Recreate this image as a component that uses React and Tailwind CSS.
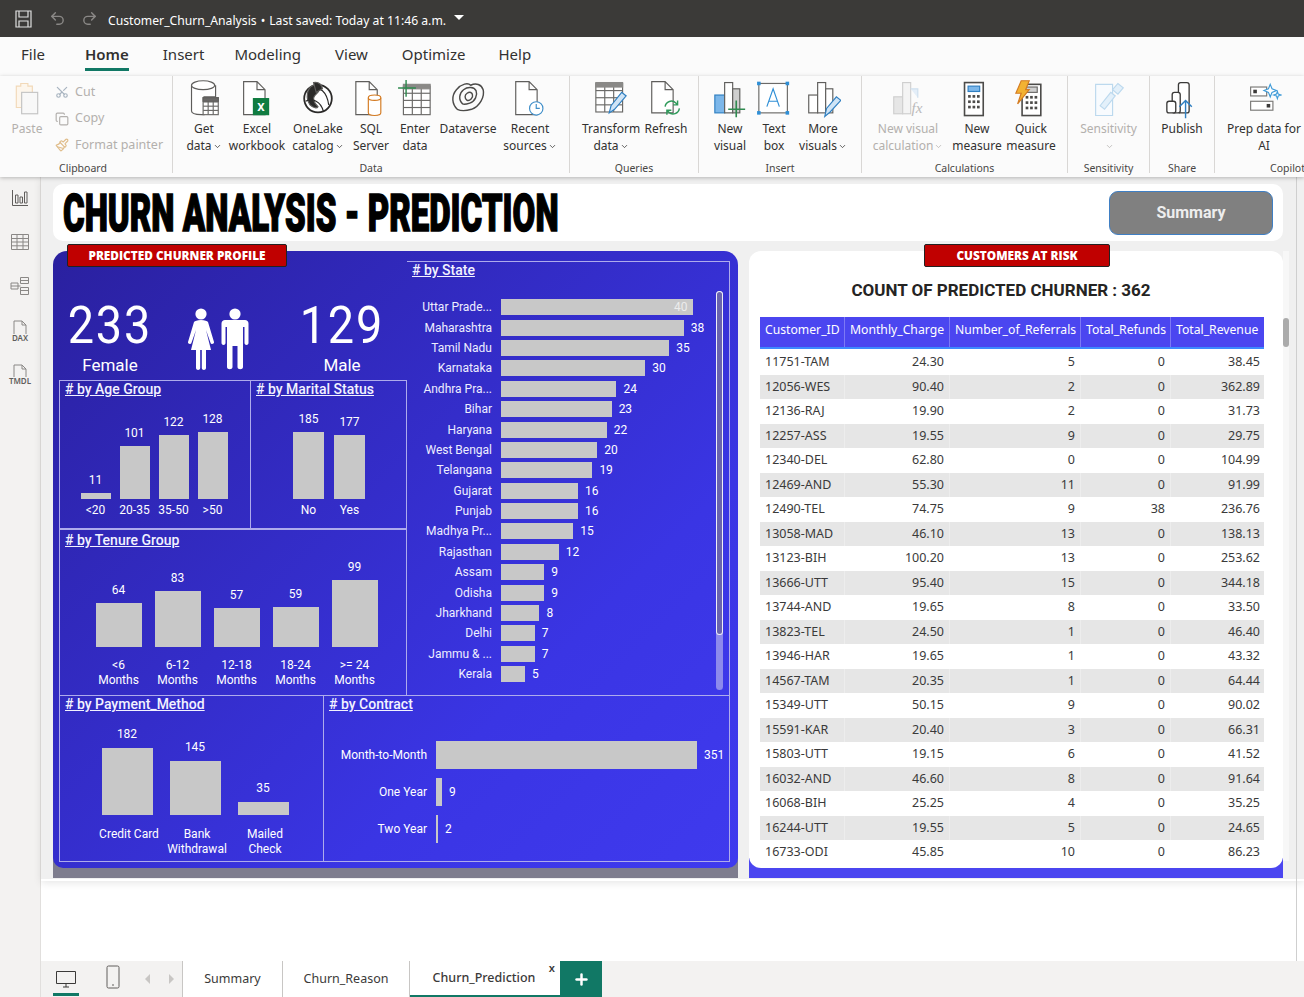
import { Scissors, Copy, Paintbrush, ChevronDown, Undo2, Redo2, Plus } from 'lucide-react';

const din = 'font-[Roboto,sans-serif]';
const ui = 'font-["Noto_Sans",sans-serif]';

const Sv = ({ children, w = 40, h = 46 }) => (
  <svg width={36} height={41} viewBox={`0 0 ${w} ${h}`} fill="none" stroke="#5f5e5c" strokeWidth="1.3">{children}</svg>
);

const Grid = ({ x, y, w, h, cols = 3, rows = 3, stroke = '#6b6a68' }) => {
  const lines = [];
  for (let i = 1; i < cols; i++) lines.push(<line key={'c' + i} x1={x + (w * i) / cols} y1={y} x2={x + (w * i) / cols} y2={y + h} />);
  for (let i = 1; i < rows; i++) lines.push(<line key={'r' + i} x1={x} y1={y + (h * i) / rows} x2={x + w} y2={y + (h * i) / rows} />);
  return (
    <g stroke={stroke}>
      <rect x={x} y={y} width={w} height={h} fill="#fff" />
      {lines}
    </g>
  );
};

const Doc = ({ x = 5, y = 3, w = 24, h = 36, stroke = '#5f5e5c' }) => (
  <path d={`M${x} ${y}h${w - 9}l9 9v${h - 9}h-${w}z M${x + w - 9} ${y}v9h9`} stroke={stroke} fill="#fff" />
);

const icons = {
  paste: (
    <Sv>
      <path d="M8 8h5v-3h8v3h5v24h-18z" stroke="#f2d9b8" fill="#fdf6ec" />
      <rect x="14" y="15" width="18" height="24" stroke="#c4c4c4" fill="#f8f8f8" />
    </Sv>
  ),
  get: (
    <Sv>
      <path d="M6 7v29c0 3 5 4 11 4h3V20h13V7" fill="#fff" />
      <ellipse cx="19" cy="7" rx="13" ry="5" fill="#fff" />
      <Grid x={19} y={21} w={17} h={19} rows={4} />
      <rect x="19" y="21" width="17" height="4" fill="#6b6a68" />
    </Sv>
  ),
  excel: (
    <Sv>
      <Doc x={5} y={3} w={24} h={37} />
      <rect x="16" y="22" width="17" height="18" fill="#107c41" stroke="#107c41" />
      <text x="24.5" y="36" fontSize="13" fontWeight="700" fill="#fff" stroke="none" textAnchor="middle" fontFamily="Roboto">X</text>
    </Sv>
  ),
  onelake: (
    <Sv>
      <circle cx="20" cy="22" r="15.5" fill="#fff" stroke="#2b2a29" strokeWidth="2" />
      <path d="M15 7c-8 3-9 15-4 22 4 4 8 4 9 2-5-5-7-10-2-14 4-3 5-7-3-10z" fill="#2b2a29" />
      <path d="M6 25c8-4 17 0 20 11M12 10c10-2 18 4 20 19" stroke="#2b2a29" />
      <path d="M15 4c6-1 9 2 10 7l-7 4z" fill="#2b2a29" />
    </Sv>
  ),
  sql: (
    <Sv>
      <Doc x={3} y={3} w={24} h={37} />
      <path d="M17 21v17c0 2 3 3 7 3s7-1 7-3V21" stroke="#d47b22" fill="#fff" />
      <ellipse cx="24" cy="21" rx="7" ry="3" stroke="#d47b22" fill="#fff" />
    </Sv>
  ),
  enter: (
    <Sv>
      <Grid x={7} y={8} w={30} h={32} rows={4} />
      <rect x="7" y="6" width="30" height="5" fill="#8a8987" stroke="#8a8987" />
      <path d="M10 1v19M1 10h20" stroke="#2f8a4f" strokeWidth="1.6" />
    </Sv>
  ),
  dataverse: (
    <Sv>
      <g stroke="#4c4b49" strokeWidth="1.6">
        <path d="M8 34c-6-6-7-15-1-22 6-7 13-8 16-5 6-3 12-1 14 5 2 8-4 19-13 22-7 2-12 2-16 0z" />
        <path d="M14 28c-5-5-4-12 1-16 5-4 12-3 14 1 2 5-1 12-7 14-3 1-6 2-8 1z" />
        <path d="M19 24c-3-2-3-6 0-8 3-2 6-1 6 2 1 3-3 7-6 6z" />
      </g>
    </Sv>
  ),
  recent: (
    <Sv>
      <Doc x={4} y={3} w={24} h={37} />
      <circle cx="27" cy="33" r="7.5" stroke="#3f8ec9" fill="#fff" />
      <path d="M27 28v5h4" stroke="#3f8ec9" />
    </Sv>
  ),
  transform: (
    <Sv>
      <Grid x={3} y={5} w={30} h={32} rows={4} />
      <rect x="3" y="4" width="30" height="5" fill="#8a8987" stroke="#8a8987" />
      <path d="M18 38l2-8 12-15 5 4-13 15z" fill="#cfe4f6" stroke="#2f7fc1" />
    </Sv>
  ),
  refresh: (
    <Sv>
      <Doc x={4} y={3} w={24} h={35} />
      <path d="M19 31a7 7 0 0 1 12-4l2 2M35 33a7 7 0 0 1-12 4l-2-2M33 24v5h-5M21 40v-5h5" stroke="#2f9a5a" strokeWidth="1.6" fill="none" />
    </Sv>
  ),
  newvisual: (
    <Sv>
      <rect x="3" y="18" width="11" height="20" fill="#7cb7ea" stroke="#2f7fc1" />
      <rect x="14" y="4" width="9" height="34" fill="#fff" />
      <rect x="23" y="11" width="8" height="27" fill="#cfcfcf" />
      <path d="M27 24v19M18 34h19" stroke="#2f8a4f" strokeWidth="1.8" />
    </Sv>
  ),
  textbox: (
    <Sv>
      <rect x="3" y="5" width="32" height="33" fill="#fff" stroke="#6b6a68" />
      <path d="M12 31l7-20 7 20M14.5 25h9" stroke="#2f8fd6" />
      {[[3, 5], [35, 5], [3, 38], [35, 38]].map(([x, y]) => (
        <rect key={x + '-' + y} x={x - 2} y={y - 2} width="4" height="4" fill="#2f8fd6" stroke="none" />
      ))}
    </Sv>
  ),
  morevisuals: (
    <Sv>
      <rect x="4" y="18" width="10" height="20" fill="#fff" />
      <rect x="14" y="4" width="9" height="34" fill="#fff" />
      <rect x="23" y="11" width="8" height="27" fill="#fff" />
      <path d="M22 42l2-9 11-13 5 4-12 13z" fill="#cfe4f6" stroke="#2f7fc1" />
    </Sv>
  ),
  visualcalc: (
    <Sv>
      <rect x="4" y="20" width="10" height="19" fill="#e6e6e6" stroke="#cfcfcf" />
      <rect x="14" y="4" width="9" height="35" fill="#f4f4f4" stroke="#cfcfcf" />
      <path d="M23 11h8v10" fill="#e4eef8" stroke="#cfdfee" />
      <text x="24" y="38" fontSize="17" fontStyle="italic" fontFamily="Liberation Serif" fill="#b9b9b9" stroke="none">fx</text>
    </Sv>
  ),
  measure: (
    <Sv>
      <rect x="6" y="4" width="21" height="37" fill="#fff" stroke="#4c4b49" strokeWidth="1.8" />
      <rect x="10" y="8" width="13" height="6" fill="#7cb7ea" stroke="#2f7fc1" />
      {[18, 24, 30].map((y) => [10, 15, 20].map((x) => <rect key={x + '-' + y} x={x} y={y} width="3" height="3" fill="#4c4b49" stroke="none" />))}
    </Sv>
  ),
  quick: (
    <Sv>
      <rect x="10" y="6" width="21" height="35" fill="#fff" stroke="#4c4b49" strokeWidth="1.8" />
      <rect x="14" y="9" width="13" height="6" fill="#cfcfcf" stroke="#6b6a68" />
      {[19, 25, 31].map((y) => [14, 19, 24].map((x) => <rect key={x + '-' + y} x={x} y={y} width="3" height="3" fill="#4c4b49" stroke="none" />))}
      <path d="M9 2h9l-4 10h4L5 28l4-12H3z" fill="#f2b233" stroke="#d47b22" />
    </Sv>
  ),
  sensitivity: (
    <Sv>
      <path d="M5 6h19v35H5z" stroke="#bcd9ee" fill="#f8fbfe" />
      <path d="M10 30l12-15 5 4-12 15zM24 12l6-7 6 5-6 7z" stroke="#bcd9ee" fill="#e3f0fa" />
    </Sv>
  ),
  publish: (
    <Sv>
      <rect x="16" y="4" width="12" height="34" rx="2.5" fill="#fff" stroke="#3b3a39" strokeWidth="1.5" />
      <rect x="9" y="15" width="9" height="23" rx="2.5" fill="#fff" stroke="#3b3a39" strokeWidth="1.5" />
      <rect x="3" y="25" width="10" height="13" rx="2.5" fill="#fff" stroke="#3b3a39" strokeWidth="1.5" />
      <path d="M24 44V24M17 31l7-7 7 7" stroke="#2f7fc1" strokeWidth="1.6" />
    </Sv>
  ),
  prep: (
    <Sv>
      <rect x="5" y="9" width="18" height="10" fill="#fff" stroke="#7a7977" />
      <rect x="8" y="12" width="4" height="4" fill="#3b3a39" stroke="none" />
      <rect x="5" y="25" width="25" height="10" fill="#fff" stroke="#7a7977" />
      <rect x="23" y="28" width="4" height="4" fill="#3b3a39" stroke="none" />
      <path d="M27 6l2 5 5 2-5 2-2 5-2-5-5-2 5-2zM35 14l1 3 3 1-3 1-1 3-1-3-3-1 3-1z" fill="#fff" stroke="#3f9bd8" />
    </Sv>
  ),
};

function RibbonItem({ w, icon, lines, caret, muted }) {
  return (
    <div className={`shrink-0 flex flex-col items-center ${muted ? 'text-[#b3b0ad]' : 'text-[#323130]'}`} style={{ width: w }}>
      <div className="h-[41px] flex items-center justify-center">{icons[icon]}</div>
      {lines.map((l, i) => (
        <div key={l + i} className="h-[17px] leading-[17px] whitespace-nowrap flex items-center">
          {l}
          {caret && i === lines.length - 1 && <ChevronDown size={9} strokeWidth={2} className="ml-[1px] mt-[2px]" />}
        </div>
      ))}
    </div>
  );
}

function RibbonGroup({ w, label, pl = 8, children }) {
  return (
    <div className="shrink-0 flex flex-col border-r border-[#d9d7d5] h-[97px] pt-[3px]" style={{ width: w }}>
      <div className="flex h-[81px] shrink-0" style={{ paddingLeft: pl }}>{children}</div>
      <div className="h-[16px] leading-[16px] text-center text-[10.5px] text-[#484644] whitespace-nowrap">{label}</div>
    </div>
  );
}

function Ribbon() {
  return (
    <div className={`${ui} h-[101px] bg-[#fbfbfb] flex text-[12px] shadow-[0_1px_4px_rgba(0,0,0,0.25)] relative z-10 overflow-hidden`}>
      <RibbonGroup w={173} label={<span className="pr-[6px]">Clipboard</span>} pl={7}>
        <RibbonItem w={40} icon="paste" lines={['Paste']} muted />
        <div className="flex flex-col pl-[8px] text-[#b3b0ad] text-[12.5px]">
          <div className="flex items-center gap-[6px] h-[26.5px]"><Scissors size={14} className="text-[#a8b4c0] rotate-[-90deg]" />Cut</div>
          <div className="flex items-center gap-[6px] h-[26.5px]"><Copy size={14} />Copy</div>
          <div className="flex items-center gap-[6px] h-[26.5px] whitespace-nowrap"><Paintbrush size={14} className="text-[#e0bd8b]" />Format painter</div>
        </div>
      </RibbonGroup>
      <RibbonGroup w={397} label="Data">
        <RibbonItem w={46} icon="get" lines={['Get', 'data']} caret />
        <RibbonItem w={60} icon="excel" lines={['Excel', 'workbook']} />
        <RibbonItem w={62} icon="onelake" lines={['OneLake', 'catalog']} caret />
        <RibbonItem w={44} icon="sql" lines={['SQL', 'Server']} />
        <RibbonItem w={44} icon="enter" lines={['Enter', 'data']} />
        <RibbonItem w={62} icon="dataverse" lines={['Dataverse']} />
        <RibbonItem w={62} icon="recent" lines={['Recent', 'sources']} caret />
      </RibbonGroup>
      <RibbonGroup w={129} label="Queries">
        <RibbonItem w={66} icon="transform" lines={['Transform', 'data']} caret />
        <RibbonItem w={44} icon="refresh" lines={['Refresh']} />
      </RibbonGroup>
      <RibbonGroup w={163} label="Insert">
        <RibbonItem w={46} icon="newvisual" lines={['New', 'visual']} />
        <RibbonItem w={42} icon="textbox" lines={['Text', 'box']} />
        <RibbonItem w={56} icon="morevisuals" lines={['More', 'visuals']} caret />
      </RibbonGroup>
      <RibbonGroup w={206} label="Calculations">
        <RibbonItem w={76} icon="visualcalc" lines={['New visual', 'calculation']} caret muted />
        <div className="w-[3px] shrink-0" />
        <RibbonItem w={56} icon="measure" lines={['New', 'measure']} />
        <RibbonItem w={52} icon="quick" lines={['Quick', 'measure']} />
      </RibbonGroup>
      <RibbonGroup w={82} label="Sensitivity" pl={0}>
        <RibbonItem w={81} icon="sensitivity" lines={['Sensitivity', '']} caret muted />
      </RibbonGroup>
      <RibbonGroup w={65} label="Share" pl={0}>
        <RibbonItem w={64} icon="publish" lines={['Publish']} />
      </RibbonGroup>
      <div className="shrink-0 w-[100px] flex flex-col h-[97px] pt-[3px]">
        <div className="flex h-[81px] shrink-0 pl-[9px]">
          <RibbonItem w={80} icon="prep" lines={['Prep data for', 'AI']} />
        </div>
        <div className="h-[16px] leading-[16px] text-[10.5px] text-[#484644] pl-[55px]">Copilot</div>
      </div>
    </div>
  );
}

const Panel = ({ title, className = '', titleClass = '', children }) => (
  <div className={`border border-[#aeabec] flex flex-col relative ${className}`}>
    <div className={`h-[18px] leading-[17px] pl-[5px] text-[14px] font-medium text-[#f2f2ff] underline whitespace-nowrap ${titleClass}`}>{title}</div>
    {children}
  </div>
);

function Column({ value, h, barW, w, labels, pt, pb, boxH, mb = 5, lx = 0 }) {
  return (
    <div className="flex flex-col items-center justify-end shrink-0 text-white" style={{ width: w }}>
      <div className="text-[12px] leading-[16px]" style={{ marginBottom: mb }}>{value}</div>
      <div className="bg-[#c8c8c8]" style={{ width: barW, height: h }} />
      <div className="text-center text-[12px] leading-[15px] whitespace-nowrap" style={{ height: boxH, paddingTop: pt, marginBottom: pb, marginLeft: lx }}>
        {labels.map((l) => <div key={l}>{l}</div>)}
      </div>
    </div>
  );
}

const People = () => (
  <svg width="62" height="62" viewBox="0 0 62 62" fill="#fff">
    <circle cx="14" cy="6" r="5.6" />
    <path d="M7 14c1-1 3-2 7-2s6 1 7 2l6 20c.4 2-2.6 3-3.4 1L19 22l5 20h-5v18c0 2.6-4.2 2.6-4.2 0V42h-1.6v18c0 2.6-4.2 2.6-4.2 0V42H4l5-20-4.6 13c-.8 2-3.8 1-3.4-1z" />
    <circle cx="48" cy="6" r="5.6" />
    <path d="M38 12h20c2 0 3.500 1.500 3.500 3.500V35c0 2.500-4 2.500-4 0V19H56v40c0 3-5.500 3-5.500 0V38h-5v21c0 3-5.500 3-5.500 0V19h-1.500v16c0 2.500-4 2.500-4 0V15.500c0-2 1.500-3.500 3.500-3.500z" />
  </svg>
);

const states = [
  ['Uttar Prade...', 40], ['Maharashtra', 38], ['Tamil Nadu', 35], ['Karnataka', 30], ['Andhra Pra...', 24],
  ['Bihar', 23], ['Haryana', 22], ['West Bengal', 20], ['Telangana', 19], ['Gujarat', 16], ['Punjab', 16],
  ['Madhya Pr...', 15], ['Rajasthan', 12], ['Assam', 9], ['Odisha', 9], ['Jharkhand', 8], ['Delhi', 7],
  ['Jammu & ...', 7], ['Kerala', 5],
];

const customers = [
  ['11751-TAM', '24.30', 5, 0, '38.45'], ['12056-WES', '90.40', 2, 0, '362.89'], ['12136-RAJ', '19.90', 2, 0, '31.73'],
  ['12257-ASS', '19.55', 9, 0, '29.75'], ['12340-DEL', '62.80', 0, 0, '104.99'], ['12469-AND', '55.30', 11, 0, '91.99'],
  ['12490-TEL', '74.75', 9, 38, '236.76'], ['13058-MAD', '46.10', 13, 0, '138.13'], ['13123-BIH', '100.20', 13, 0, '253.62'],
  ['13666-UTT', '95.40', 15, 0, '344.18'], ['13744-AND', '19.65', 8, 0, '33.50'], ['13823-TEL', '24.50', 1, 0, '46.40'],
  ['13946-HAR', '19.65', 1, 0, '43.32'], ['14567-TAM', '20.35', 1, 0, '64.44'], ['15349-UTT', '50.15', 9, 0, '90.02'],
  ['15591-KAR', '20.40', 3, 0, '66.31'], ['15803-UTT', '19.15', 6, 0, '41.52'], ['16032-AND', '46.60', 8, 0, '91.64'],
  ['16068-BIH', '25.25', 4, 0, '35.25'], ['16244-UTT', '19.55', 5, 0, '24.65'], ['16733-ODI', '45.85', 10, 0, '86.23'],
];

const headers = ['Customer_ID', 'Monthly_Charge', 'Number_of_Referrals', 'Total_Refunds', 'Total_Revenue'];

function LeftPanel() {
  return (
    <div className="w-[685px] shrink-0 flex flex-col">
      <div className={`${din} relative z-10 rounded-t-[14px] rounded-b-[10px] h-[617px] pt-[10px] pl-[6px] pr-[8px] bg-[linear-gradient(135deg,#2a209f,#3a35e4_70%,#3f3aee)] text-white`}>
        <div className="flex h-[435px]">
          <div className="w-[348px] shrink-0 flex flex-col">
            <div className="h-[119px] flex">
              <div className="w-[102px] flex flex-col items-center">
                <div className="text-[52px] leading-[60px] mt-[35px] tracking-[2px] whitespace-nowrap scale-x-[0.9]">233</div>
                <div className="text-[17px] leading-[22px] -mt-[2px]">Female</div>
              </div>
              <div className="ml-[26px] mt-[47px]"><People /></div>
              <div className="ml-[41px] w-[104px] flex flex-col items-center">
                <div className="text-[52px] leading-[60px] mt-[35px] tracking-[2px] whitespace-nowrap scale-x-[0.9]">129</div>
                <div className="text-[17px] leading-[22px] -mt-[2px]">Male</div>
              </div>
            </div>
            <div className="flex h-[149px]">
              <Panel title="# by Age Group" className="w-[192px]">
                <div className="flex-1 flex pl-[16px]">
                  {[[11, 6, '<20'], [101, 53, '20-35'], [122, 64, '35-50'], [128, 67, '>50']].map(([v, h, l]) => (
                    <Column key={l} value={v} h={h} barW={30} w={39} labels={[l]} pt={4} pb={5} boxH={24} />
                  ))}
                </div>
              </Panel>
              <Panel title="# by Marital Status" className="w-[156px] border-l-0">
                <div className="flex-1 flex pl-[37px]">
                  <Column value={185} h={67} barW={31} w={41} labels={['No']} pt={4} pb={5} boxH={24} />
                  <Column value={177} h={64} barW={31} w={41} labels={['Yes']} pt={4} pb={5} boxH={24} />
                </div>
              </Panel>
            </div>
            <Panel title="# by Tenure Group" className="h-[167px]" titleClass="mt-[2px]">
              <div className="flex-1 flex pl-[29px]">
                {[[64, 44, '<6'], [83, 56, '6-12'], [57, 39, '12-18'], [59, 40, '18-24'], [99, 67, '>= 24']].map(([v, h, l]) => (
                  <Column key={l} value={v} h={h} barW={46} w={59} labels={[l, 'Months']} pt={11} pb={8} boxH={40} />
                ))}
              </div>
            </Panel>
          </div>
          <Panel title="# by State" className="w-[323px] border-l-0">
            <div className="mt-[17px]">
              {states.map(([name, v]) => (
                <div key={name} className="h-[20.4px] flex items-center text-[12px]">
                  <div className="w-[85px] text-right whitespace-nowrap text-[#eeeeff]">{name}</div>
                  <div className="ml-[9px] h-[16px] bg-[#c8c8c8] relative" style={{ width: v * 4.81 }}>
                    {v === 40 && <span className="absolute right-[6px] top-0 leading-[16px] text-[#ececec]">40</span>}
                  </div>
                  {v !== 40 && <div className="ml-[7px] text-white">{v}</div>}
                </div>
              ))}
            </div>
            <div className="absolute left-[309px] top-[29px] w-[7px] h-[399px] rounded-[4px] bg-[#8d8aec]">
              <div className="h-[344px] rounded-[4px] border border-white/90 bg-[#6a64ae]" />
            </div>
          </Panel>
        </div>
        <div className="flex h-[166px]">
          <Panel title="# by Payment_Method" className="w-[265px] border-t-0">
            <div className="flex-1 flex pl-[33px]">
              <Column value={182} h={67} barW={51} w={68} labels={['Credit Card']} pt={12} pb={6} boxH={40} mb={6} lx={4} />
              <Column value={145} h={54} barW={51} w={68} labels={['Bank', 'Withdrawal']} pt={12} pb={6} boxH={40} mb={6} lx={4} />
              <Column value={35} h={13} barW={51} w={68} labels={['Mailed', 'Check']} pt={12} pb={6} boxH={40} mb={6} lx={4} />
            </div>
          </Panel>
          <Panel title="# by Contract" className="w-[406px] border-l-0 border-t-0">
            <div className="mt-[27px] flex flex-col gap-[9px] text-[12px]">
              {[['Month-to-Month', 261, 351], ['One Year', 6, 9], ['Two Year', 2, 2]].map(([l, w, v]) => (
                <div key={l} className="h-[28px] flex items-center">
                  <div className="w-[103px] text-right whitespace-nowrap">{l}</div>
                  <div className="ml-[9px] h-[28px] bg-[#c8c8c8]" style={{ width: w }} />
                  <div className="ml-[7px]">{v}</div>
                </div>
              ))}
            </div>
          </Panel>
        </div>
      </div>
      <div className="-mt-[10px] h-[20px] bg-[#7e7d8e]" />
    </div>
  );
}

function RightPanel() {
  return (
    <div className="w-[534px] shrink-0 flex flex-col">
      <div className="relative z-10 h-[617px] bg-white rounded-[12px] flex flex-col">
        <div className={`${din} h-[66px] pt-[27px] pr-[30px] text-center text-[17px] leading-[24px] font-bold text-[#252423]`}>COUNT OF PREDICTED CHURNER : 362</div>
        <div className={`${ui} ml-[11px] w-[504px] text-[12.5px]`}>
          <div className="flex h-[32px] bg-[#4b46f0] text-white text-[12.2px] border-b-2 border-[#3d8bff]">
            {headers.map((h, i) => (
              <div key={h} className={`${['w-[85px]', 'w-[105px]', 'w-[131px]', 'w-[90px]', 'w-[93px]'][i]} px-[5px] leading-[25px] whitespace-nowrap ${i < 4 ? 'border-r border-[#7d79f5]' : ''}`}>{h}</div>
            ))}
          </div>
          <div className="mt-[1px]">
            {customers.map((r, i) => (
              <div key={r[0]} className={`flex h-[24.5px] leading-[24.5px] text-[#3a3a3a] ${i % 2 ? 'bg-[#e6e6e6]' : 'bg-white'}`}>
                <div className="w-[85px] px-[5px] border-r border-white/30">{r[0]}</div>
                <div className="w-[105px] px-[5px] text-right border-r border-white/30">{r[1]}</div>
                <div className="w-[131px] px-[5px] text-right border-r border-white/30">{r[2]}</div>
                <div className="w-[90px] px-[5px] text-right border-r border-white/30">{r[3]}</div>
                <div className="w-[93px] px-[4px] text-right">{r[4]}</div>
              </div>
            ))}
          </div>
        </div>
      </div>
      <div className="-mt-[10px] h-[20px] bg-[#4b46f0]" />
    </div>
  );
}

const RedTag = ({ children, className }) => (
  <div className={`absolute z-20 top-[67px] h-[23px] bg-[#c00000] border border-[#222] rounded-[2px] flex items-center justify-center text-white text-[11.8px] font-black font-["Open_Sans",sans-serif] whitespace-nowrap ${className}`}>{children}</div>
);

export default function App() {
  return (
    <div className={`${ui} w-[1304px] h-[997px] overflow-hidden bg-white flex flex-col`}>
      {/* title bar */}
      <div className="h-[37px] bg-[#3b3a38] flex items-center text-white shrink-0">
        <svg className="ml-[15px]" width="17" height="18" viewBox="0 0 17 18" fill="none" stroke="#e0e0e0" strokeWidth="1.2">
          <path d="M1 1h15v16H1zM4 1v6h9V1M4 17v-6h9v6" />
        </svg>
        <Undo2 size={17} className="ml-[17px] text-[#8a8886]" />
        <Redo2 size={17} className="ml-[15px] text-[#8a8886]" />
        <span className="ml-[10px] mt-[6px] text-[12.2px] whitespace-nowrap">Customer_Churn_Analysis<span className="mx-[4px]">•</span>Last saved: Today at 11:46 a.m.</span>
        <span className="ml-[8px] mb-[3px] w-0 h-0 border-x-[5px] border-x-transparent border-t-[5px] border-t-white" />
      </div>
      {/* menu */}
      <div className="h-[39px] bg-[#fbfbfb] flex items-start pt-[6px] pl-[21px] text-[15px] text-[#323130] shrink-0">
        <span>File</span>
        <span className="relative font-semibold ml-[40px]">Home<span className="absolute left-0 right-0 top-[25px] h-[3px] bg-[#117865]" /></span>
        <span className="ml-[34px]">Insert</span>
        <span className="ml-[30px]">Modeling</span>
        <span className="ml-[34px]">View</span>
        <span className="ml-[34px]">Optimize</span>
        <span className="ml-[33px]">Help</span>
      </div>
      <Ribbon />
      <div className="flex-1 flex min-h-0">
        {/* side nav */}
        <div className="w-[41px] shrink-0 bg-[#f3f2f1] border-r border-[#e1dfdd] flex flex-col items-center -mt-px">
          <div className="h-[44px] flex items-center justify-center">
            <svg width="18" height="18" viewBox="0 0 18 18" fill="none" stroke="#605e5c"><path d="M1.5 1v15.500H17M4.500 14V6H7v8zM9 14V8h2.500v6zM13.500 14V3H16v11z" /></svg>
          </div>
          <div className="h-[44px] flex items-center justify-center">
            <svg width="18" height="16" viewBox="0 0 18 16" fill="none" stroke="#8a8886"><path d="M.5.5h17v15H.5zM.5 4.500h17M.5 8h17M.5 11.800h17M6 .5v15M12 .5v15" /></svg>
          </div>
          <div className="h-[44px] flex items-center justify-center">
            <svg width="20" height="20" viewBox="0 0 20 20" fill="none" stroke="#8a8886"><path d="M1 7h7v6H1zM10.500 1.500h8v6h-8zM10.500 11.500h8v7h-8zM1 10h7M10.500 4.500h8M10.500 14.500h8M8 10h2.500" /></svg>
          </div>
          <div className="h-[44px] flex flex-col items-center justify-center">
            <svg width="16" height="14" viewBox="0 0 16 14" fill="none" stroke="#8a8886"><path d="M2 14V1h8l4 4v9M10 1v4h4" /></svg>
            <span className="text-[8px] leading-[7px] font-semibold text-[#605e5c]">DAX</span>
          </div>
          <div className="h-[44px] flex flex-col items-center justify-center">
            <svg width="16" height="13" viewBox="0 0 16 13" fill="none" stroke="#8a8886"><path d="M2 13V1h8l4 4v8M10 1v4h4" /></svg>
            <span className="text-[8px] leading-[7px] font-semibold text-[#605e5c]">TMDL</span>
          </div>
        </div>
        <div className="flex-1 flex flex-col min-w-0 relative">
          {/* canvas */}
          <div className="relative h-[704px] bg-[#f0f0f0] border-b-[2px] border-white shadow-[0_2px_8px_rgba(0,0,0,0.1)] pl-[12px] pt-[7px] shrink-0">
            <div className="h-[57px] w-[1230px] bg-white rounded-[10px] flex items-center justify-between pl-[10px] pr-[10px]">
              <div className="mt-[2px] text-[52px] leading-[57px] font-black text-black whitespace-nowrap font-[Roboto,sans-serif] [-webkit-text-stroke:1.5px_black] scale-x-[0.635] origin-left">CHURN ANALYSIS - PREDICTION</div>
              <div className={`${din} w-[164px] h-[44px] bg-[#808080] border border-[#3f7fc4] rounded-[9px] flex items-center justify-center text-[16px] font-bold text-[#eeeeee]`}>Summary</div>
            </div>
            <div className="mt-[10px] flex gap-[11px]">
              <LeftPanel />
              <RightPanel />
            </div>
            <RedTag className="left-[26px] w-[220px]">PREDICTED CHURNER PROFILE</RedTag>
            <RedTag className="left-[883px] w-[186px]">CUSTOMERS AT RISK</RedTag>
            <div className="absolute left-[1242px] top-[74px] w-[6px] h-[610px] bg-[#f7f7f7]">
              <div className="mt-[67px] h-[29px] rounded-[3px] bg-[#ababab]" />
            </div>
          </div>
          <div className="flex-1 bg-white" />
          <div className="absolute left-[1255px] top-0 bottom-[36px] w-px bg-[#cfcfcf]" />
          {/* page tabs */}
          <div className={`${ui} h-[36px] shrink-0 flex bg-[#f3f2f1] text-[12.5px] text-[#3b3a39]`}>
            <div className="w-[142px] shrink-0 border-r border-[#c8c6c4] flex items-center">
              <div className="relative ml-[12px] w-[26px] h-full flex items-center justify-center">
                <svg width="22" height="18" viewBox="0 0 22 18" fill="none" stroke="#3b3a39"><path d="M1.5 1.500h19v12h-19zM8 17h6M11 13.500V17" /></svg>
                <span className="absolute bottom-[1px] left-0 right-0 h-[3px] bg-[#117865]" />
              </div>
              <svg className="ml-[27px] mb-[4px]" width="14" height="24" viewBox="0 0 14 24" fill="none" stroke="#605e5c"><rect x="1" y="1" width="12" height="22" rx="1.5" /><path d="M6 20h2" /></svg>
              <div className="ml-[25px] w-0 h-0 border-y-[5px] border-y-transparent border-r-[5px] border-r-[#c8c6c4]" />
              <div className="ml-[19px] w-0 h-0 border-y-[5px] border-y-transparent border-l-[5px] border-l-[#c8c6c4]" />
            </div>
            <div className="w-[100px] bg-white border-r border-[#c8c6c4] flex items-center justify-center">Summary</div>
            <div className="w-[127px] bg-white flex items-center justify-center border-r border-[#c8c6c4]">Churn_Reason</div>
            <div className="relative w-[150px] bg-white border-b-[2px] border-[#117865] flex items-center justify-center font-medium pr-[2px]">
              Churn_Prediction
              <span className="absolute right-[5px] top-[1px] text-[11px] leading-[12px] font-semibold">x</span>
            </div>
            <div className="w-[42px] bg-[#117865] flex items-center justify-center">
              <Plus size={17} strokeWidth={3.5} className="text-white" />
            </div>
          </div>
        </div>
      </div>
    </div>
  );
}
